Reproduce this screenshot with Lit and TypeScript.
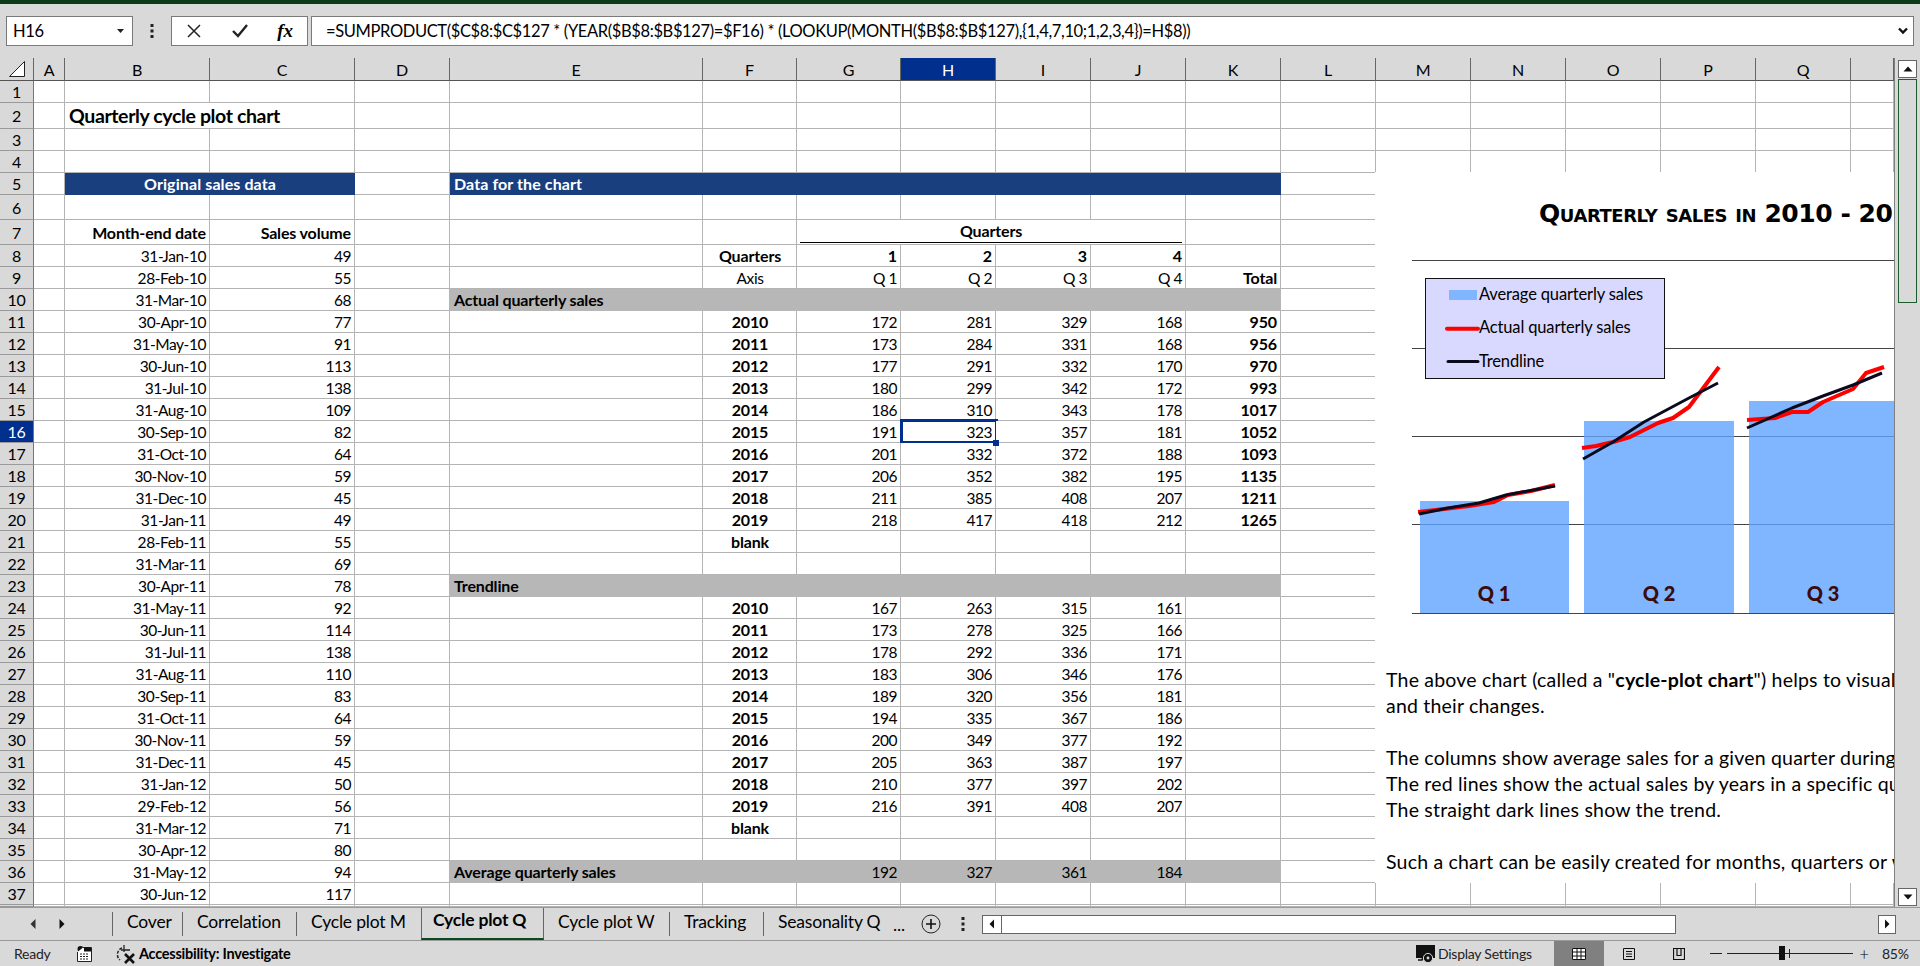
import { LitElement, html, css, svg, nothing } from "lit";
import { customElement } from "lit/decorators.js";

const COLS = ["A", "B", "C", "D", "E", "F", "G", "H", "I", "J", "K", "L", "M", "N", "O", "P", "Q", ""];

type Cell = { t?: unknown; c?: string; span?: number };

const DATES = "31-Jan-10 28-Feb-10 31-Mar-10 30-Apr-10 31-May-10 30-Jun-10 31-Jul-10 31-Aug-10 30-Sep-10 31-Oct-10 30-Nov-10 31-Dec-10 31-Jan-11 28-Feb-11 31-Mar-11 30-Apr-11 31-May-11 30-Jun-11 31-Jul-11 31-Aug-11 30-Sep-11 31-Oct-11 30-Nov-11 31-Dec-11 31-Jan-12 29-Feb-12 31-Mar-12 30-Apr-12 31-May-12 30-Jun-12".split(" ");
const VOLUMES = [49, 55, 68, 77, 91, 113, 138, 109, 82, 64, 59, 45, 49, 55, 69, 78, 92, 114, 138, 110, 83, 64, 59, 45, 50, 56, 71, 80, 94, 117];

const ACTUAL = [
  [2010, 172, 281, 329, 168, 950],
  [2011, 173, 284, 331, 168, 956],
  [2012, 177, 291, 332, 170, 970],
  [2013, 180, 299, 342, 172, 993],
  [2014, 186, 310, 343, 178, 1017],
  [2015, 191, 323, 357, 181, 1052],
  [2016, 201, 332, 372, 188, 1093],
  [2017, 206, 352, 382, 195, 1135],
  [2018, 211, 385, 408, 207, 1211],
  [2019, 218, 417, 418, 212, 1265],
];
const TREND = [
  [2010, 167, 263, 315, 161],
  [2011, 173, 278, 325, 166],
  [2012, 178, 292, 336, 171],
  [2013, 183, 306, 346, 176],
  [2014, 189, 320, 356, 181],
  [2015, 194, 335, 367, 186],
  [2016, 200, 349, 377, 192],
  [2017, 205, 363, 387, 197],
  [2018, 210, 377, 397, 202],
  [2019, 216, 391, 408, 207],
];

function buildCells() {
  const cells: Record<string, Cell> = {
    B2: { t: "Quarterly cycle plot chart", c: "title", span: 2 },
    B5: { t: "Original sales data", c: "head mid", span: 2 },
    E5: { t: "Data for the chart", c: "head", span: 7 },
    B7: { t: "Month-end date", c: "b r" },
    C7: { t: "Sales volume", c: "b r" },
    G7: { t: html`<span class="under">Quarters</span>`, c: "b mid group", span: 4 },
    F8: { t: "Quarters", c: "b mid" },
    F9: { t: "Axis", c: "mid" },
    K9: { t: "Total", c: "b r" },
    E10: { t: "Actual quarterly sales", c: "band b", span: 7 },
    F21: { t: "blank", c: "b mid" },
    E23: { t: "Trendline", c: "band b", span: 7 },
    F34: { t: "blank", c: "b mid" },
  };
  DATES.forEach((d, i) => {
    cells[`B${i + 8}`] = { t: d, c: "r" };
    cells[`C${i + 8}`] = { t: VOLUMES[i], c: "r" };
  });
  ["G", "H", "I", "J"].forEach((col, i) => {
    cells[`${col}8`] = { t: i + 1, c: "b r" };
    cells[`${col}9`] = { t: `Q ${i + 1}`, c: "r" };
  });
  ACTUAL.forEach((row, i) => {
    row.forEach((v, j) => {
      const col = ["F", "G", "H", "I", "J", "K"][j];
      cells[`${col}${i + 11}`] = { t: v, c: j === 0 ? "b mid" : j === 5 ? "b r" : "r" };
    });
  });
  TREND.forEach((row, i) => {
    row.forEach((v, j) => {
      const col = ["F", "G", "H", "I", "J"][j];
      cells[`${col}${i + 24}`] = { t: v, c: j === 0 ? "b mid" : "r" };
    });
  });
  cells.H16.c = "r active";
  cells.E36 = { t: "Average quarterly sales", c: "band b" };
  cells.F36 = { c: "band" };
  [192, 327, 361, 184].forEach((v, i) => {
    cells[`${["G", "H", "I", "J"][i]}36`] = { t: v, c: "band r" };
  });
  cells.K36 = { c: "band" };
  return cells;
}

const CELLS = buildCells();
const TABS = ["Cover", "Correlation", "Cycle plot M", "Cycle plot Q", "Cycle plot W", "Tracking", "Seasonality Q"];

@customElement("quarter-chart")
class QuarterChart extends LitElement {
  static styles = css`
    :host {
      display: block;
      position: absolute;
      left: 1375px;
      top: 114px;
      width: 519px;
      height: 711px;
      background: #fff;
      overflow: hidden;
      font-family: Lato, sans-serif;
      letter-spacing: 0;
    }
    svg {
      display: block;
    }
    .heading {
      font-family: "DejaVu Sans", sans-serif;
      font-weight: 700;
      font-size: 25px;
      font-variant: small-caps;
      letter-spacing: -0.45px;
      fill: #000;
    }
    .legend-text {
      font-size: 16.5px;
      letter-spacing: -0.15px;
      fill: #000;
    }
    .axis-label {
      font-size: 20px;
      font-weight: 900;
      fill: #3c0a0a;
      text-anchor: middle;
    }
    .notes {
      margin-top: 35px;
      padding-left: 11px;
      font-size: 19.5px;
      letter-spacing: 0.2px;
      line-height: 26px;
      white-space: nowrap;
      color: #000;
    }
    .notes p {
      margin: 0 0 26px;
    }
  `;

  render() {
    return html`
      <svg width="519" height="460" viewBox="0 0 519 460">
        <text class="heading" x="164" y="50">Quarterly sales in 2010 - 2019</text>
        ${[88, 176, 264, 352, 441].map((y) => svg`<line x1="37" x2="519" y1=${y + 0.5} y2=${y + 0.5} stroke="#444" />`)}
        ${[[45, 329, 149], [209, 249, 150], [374, 229, 145]].map(
          ([x, y, w]) => svg`<rect x=${x} y=${y} width=${w} height=${441 - y} fill="#60a4ff" fill-opacity="0.8" />`
        )}
        <text class="axis-label" x="119" y="429">Q 1</text>
        <text class="axis-label" x="284" y="429">Q 2</text>
        <text class="axis-label" x="448" y="429">Q 3</text>
        <g fill="none" stroke="#ff0000" stroke-width="4" stroke-linejoin="round">
          <polyline points="43,340 69,337 94,334 119,330 133,323 156,319 180,313" />
          <polyline points="207,276 221,274 238,270 255,265 283,251 298,246 314,235 329,215 344,195" />
          <polyline points="372,248 400,246 417,240 433,240 448,230 478,217 491,201 509,195" />
        </g>
        <g fill="none" stroke="#0a0a1e" stroke-width="3" stroke-linejoin="round">
          <polyline points="44,342 73,336 104,331 131,323 180,314" />
          <polyline points="208,287 238,270 269,250 314,226 343,211" />
          <polyline points="372,256 417,236 448,224 478,213 507,201" />
        </g>
        <rect x="50.5" y="106.5" width="239" height="100" fill="#d9d9ff" stroke="#111" />
        <rect x="74" y="118" width="28" height="10" fill="#80b6ff" />
        <line x1="72" x2="103" y1="156.7" y2="156.7" stroke="#ff0000" stroke-width="4" stroke-linecap="round" />
        <line x1="73" x2="103" y1="189.5" y2="189.5" stroke="#0a0a1e" stroke-width="3" stroke-linecap="round" />
        <text class="legend-text" x="104" y="128">Average quarterly sales</text>
        <text class="legend-text" x="104" y="161">Actual quarterly sales</text>
        <text class="legend-text" x="104" y="195">Trendline</text>
      </svg>
      <div class="notes">
        <p>The above chart (called a "<b>cycle-plot chart</b>") helps to visualize seasonal patterns<br />and their changes.</p>
        <p>The columns show average sales for a given quarter during the years.<br />The red lines show the actual sales by years in a specific quarter.<br />The straight dark lines show the trend.</p>
        <p>Such a chart can be easily created for months, quarters or weeks.</p>
      </div>
    `;
  }
}

@customElement("app-root")
export class AppRoot extends LitElement {
  static styles = css`
    :host {
      display: flex;
      flex-direction: column;
      width: 1920px;
      height: 966px;
      overflow: hidden;
      background: #d9d9d9;
      font-family: Lato, sans-serif;
      color: #000;
    }
    .top-strip {
      height: 4px;
      background: #0a3a18;
      flex: none;
    }
    /* formula bar */
    .formula-row {
      display: flex;
      align-items: stretch;
      flex: none;
      height: 30px;
      margin: 12px 6px 12px 6px;
    }
    .name-box,
    .fx-box,
    .formula {
      background: #fff;
      border: 1px solid #7a7a7a;
      box-sizing: border-box;
      display: flex;
      align-items: center;
    }
    .name-box {
      width: 127px;
      padding: 0 6px;
      justify-content: space-between;
      font-size: 16.5px;
      letter-spacing: -0.3px;
    }
    .dots {
      width: 38px;
      display: flex;
      align-items: center;
      justify-content: center;
    }
    .fx-box {
      width: 137px;
      justify-content: space-between;
      padding: 0 14px 0 14px;
    }
    .fx {
      font-family: "Liberation Serif", serif;
      font-style: italic;
      font-weight: 700;
      font-size: 19px;
    }
    .formula {
      flex: 1;
      margin-left: 3px;
      padding: 0 4px 0 14px;
      justify-content: space-between;
      font-size: 16.5px;
      letter-spacing: -0.37px;
      white-space: nowrap;
    }
    /* sheet */
    .sheet-row {
      display: flex;
      flex: none;
      height: 849px;
    }
    .sheet {
      position: relative;
      width: 1895px;
      border-right: 1px solid #808080;
      box-sizing: border-box;
      overflow: hidden;
      display: grid;
      grid-template-columns: 34px 31px 145px 145px 95px 253px 94px 104px 95px 95px 95px 95px 95px 95px 95px 95px 95px 95px 43px;
      grid-template-rows: 23px 22px 26px 22px 22px 22px 25px 25px repeat(30, 22px) 2px;
      font-size: 15.5px;
      letter-spacing: -0.45px;
    }
    .corner,
    .col,
    .row {
      background: #d9d9d9;
      display: flex;
      align-items: center;
      justify-content: center;
      box-sizing: border-box;
      font-size: 16px;
      letter-spacing: -0.2px;
    }
    .corner {
      border-right: 1px solid #666;
      border-bottom: 1px solid #555;
    }
    .col {
      border-right: 1px solid #666;
      border-bottom: 1px solid #555;
    }
    .col:last-of-type {
      border-right: none;
    }
    .row {
      border-right: 1px solid #777;
      border-bottom: 1px solid #9a9a9a;
    }
    .sel {
      background: #002f8e;
      color: #fff;
    }
    .cell {
      box-sizing: border-box;
      background: #fff;
      border-right: 1px solid #b4b4b4;
      border-bottom: 1px solid #b4b4b4;
      padding: 0 3px 0 4px;
      display: flex;
      align-items: center;
      white-space: nowrap;
      min-width: 0;
      position: relative;
    }
    .r {
      justify-content: flex-end;
    }
    .mid {
      justify-content: center;
    }
    .b {
      font-size: 16px;
      letter-spacing: -0.15px;
      font-weight: 700;
    }
    .title {
      font-size: 19.5px;
      letter-spacing: -0.37px;
      font-weight: 700;
    }
    .head {
      background: #1a3f7f;
      border-color: #1a3f7f;
      color: #fff;
      font-size: 16px;
      letter-spacing: 0.1px;
      font-weight: 700;
    }
    .band {
      background: #b7b7b7;
      border-color: #b7b7b7;
    }
    .group {
      align-items: stretch;
      padding: 0 3px 1px 3px;
    }
    .under {
      flex: 1;
      text-align: center;
      line-height: 22px;
      border-bottom: 1px solid #000;
    }
    .active::after {
      content: "";
      position: absolute;
      left: -1px;
      top: -2px;
      right: -3px;
      bottom: -2px;
      border: 3px solid #002f8e;
    }
    .active::before {
      content: "";
      position: absolute;
      right: -4px;
      bottom: -4px;
      width: 6px;
      height: 6px;
      background: #002f8e;
      z-index: 1;
    }
    /* scrollbars */
    .vscroll {
      flex: 1;
      display: flex;
      flex-direction: column;
      align-items: center;
      padding: 2px 0 1px;
      box-sizing: border-box;
    }
    .arrow-btn {
      width: 19px;
      height: 18px;
      background: #fff;
      border: 1px solid #666;
      box-sizing: border-box;
      display: flex;
      align-items: center;
      justify-content: center;
      flex: none;
    }
    .thumb {
      width: 19px;
      height: 224px;
      margin-top: 1px;
      border: 1px solid #1e5c2e;
      box-sizing: border-box;
      background: #d9d9d9;
      flex: none;
    }
    .spacer {
      flex: 1;
    }
    /* tabs */
    .tabbar {
      flex: none;
      height: 32px;
      display: flex;
      align-items: center;
      border-top: 1px solid #999;
      border-bottom: 1px solid #999;
      box-sizing: content-box;
      font-size: 17.5px;
      letter-spacing: -0.2px;
    }
    .nav {
      width: 112px;
      flex: none;
      display: flex;
      gap: 23px;
      padding-left: 30px;
      box-sizing: border-box;
    }
    .tab {
      height: 24px;
      display: flex;
      align-items: center;
      flex: none;
      border-left: 1px solid #666;
      box-sizing: border-box;
      white-space: nowrap;
      padding: 0 0 5px 14px;
    }
    .tab.on {
      height: 100%;
      align-self: stretch;
      border-left: 1px solid #666;
      border-right: 1px solid #666;
      border-bottom: 2px solid #0a4a20;
      font-weight: 700;
      margin-bottom: -1px;
      padding-left: 11px;
      padding-bottom: 7px;
    }
    .tab.on + .tab {
      border-left: none;
    }
    .more {
      width: 28px;
      flex: none;
      text-align: center;
    }
    .add {
      width: 20px;
      height: 20px;
      flex: none;
      margin-left: 8px;
    }
    .tab-dots {
      width: 22px;
      margin-left: 11px;
      display: flex;
      justify-content: center;
      flex: none;
    }
    .hscroll {
      width: 694px;
      height: 19px;
      flex: none;
      margin-left: 8px;
      background: #fff;
      border: 1px solid #666;
      box-sizing: border-box;
      display: flex;
    }
    .hleft {
      width: 18px;
      border-right: 1px solid #666;
      display: flex;
      align-items: center;
      justify-content: center;
    }
    .hright {
      width: 18px;
      height: 19px;
      flex: none;
      margin-left: 202px;
      background: #fff;
      border: 1px solid #666;
      box-sizing: border-box;
      display: flex;
      align-items: center;
      justify-content: center;
    }
    /* status */
    .status {
      flex: 1;
      display: flex;
      align-items: center;
      font-size: 14px;
      letter-spacing: -0.25px;
      white-space: nowrap;
    }
    .ready {
      margin-left: 14px;
      width: 63px;
      color: #222;
    }
    .acc {
      margin-left: 24px;
      display: flex;
      align-items: center;
      gap: 3px;
      font-size: 14.5px;
      font-weight: 700;
      width: 1300px;
    }
    .display {
      display: flex;
      align-items: center;
      gap: 2px;
      width: 138px;
      color: #222;
    }
    .view {
      width: 50px;
      height: 100%;
      display: flex;
      align-items: center;
      justify-content: center;
      flex: none;
    }
    .view.on {
      background: #808080;
    }
    .zoom-minus {
      margin-left: 6px;
      width: 12px;
      height: 1px;
      background: #222;
      flex: none;
    }
    .slider {
      margin-left: 5px;
      width: 126px;
      height: 1px;
      background: #222;
      position: relative;
      flex: none;
    }
    .knob {
      position: absolute;
      left: 52px;
      top: -7px;
      width: 6px;
      height: 14px;
      background: #111;
    }
    .tick {
      position: absolute;
      left: 62px;
      top: -4px;
      width: 1px;
      height: 9px;
      background: #222;
    }
    .zoom-plus {
      margin-left: 4px;
      font-size: 17px;
      width: 14px;
      text-align: center;
      font-weight: 300;
    }
    .pct {
      margin-left: 11px;
      color: #222;
    }
  `;

  renderSheet() {
    const out: unknown[] = [];
    out.push(html`<div class="corner">
      <svg width="18" height="18" viewBox="0 0 18 18"><path d="M1.5 16.5 L16.5 1.5 V16.5 Z" fill="#fff" stroke="#222" /></svg>
    </div>`);
    COLS.forEach((c) => out.push(html`<div class="col ${c === "H" ? "sel" : ""}">${c}</div>`));
    for (let r = 1; r <= 38; r++) {
      out.push(html`<div class="row ${r === 16 ? "sel" : ""}">${r < 38 ? r : nothing}</div>`);
      for (let i = 0; i < COLS.length; ) {
        const d = CELLS[`${COLS[i]}${r}`];
        const span = d?.span ?? 1;
        out.push(html`<div class="cell ${d?.c ?? ""}" style=${span > 1 ? `grid-column: span ${span}` : ""}>${d?.t ?? nothing}</div>`);
        i += span;
      }
    }
    return out;
  }

  render() {
    return html`
      <div class="top-strip"></div>
      <div class="formula-row">
        <div class="name-box">
          <span>H16</span>
          <svg width="10" height="6" viewBox="0 0 10 6"><path d="M1 1 H8 L4.5 5 Z" fill="#222" /></svg>
        </div>
        <div class="dots">
          <svg width="4" height="16" viewBox="0 0 4 16"><g fill="#222"><rect x="0.5" y="1" width="3" height="3" /><rect x="0.5" y="6.5" width="3" height="3" /><rect x="0.5" y="12" width="3" height="3" /></g></svg>
        </div>
        <div class="fx-box">
          <svg width="16" height="16" viewBox="0 0 16 16"><path d="M2 2 L14 14 M14 2 L2 14" stroke="#222" stroke-width="1.5" fill="none" /></svg>
          <svg width="18" height="16" viewBox="0 0 18 16"><path d="M2 8 L7 13 L16 2" stroke="#222" stroke-width="2.4" fill="none" /></svg>
          <span class="fx">fx</span>
        </div>
        <div class="formula">
          <span>=SUMPRODUCT($C$8:$C$127 * (YEAR($B$8:$B$127)=$F16) * (LOOKUP(MONTH($B$8:$B$127),{1,4,7,10;1,2,3,4})=H$8))</span>
          <svg width="12" height="8" viewBox="0 0 12 8"><path d="M2 1.5 L6 5.5 L10 1.5" stroke="#111" stroke-width="2.4" fill="none" /></svg>
        </div>
      </div>
      <div class="sheet-row">
        <div class="sheet">
          ${this.renderSheet()}
          <quarter-chart></quarter-chart>
        </div>
        <div class="vscroll">
          <div class="arrow-btn"><svg width="10" height="6" viewBox="0 0 10 6"><path d="M0.5 5.5 H9.5 L5 0.5 Z" fill="#111" /></svg></div>
          <div class="thumb"></div>
          <div class="spacer"></div>
          <div class="arrow-btn"><svg width="10" height="6" viewBox="0 0 10 6"><path d="M0.5 0.5 H9.5 L5 5.5 Z" fill="#111" /></svg></div>
        </div>
      </div>
      <div class="tabbar">
        <div class="nav">
          <svg width="6" height="10" viewBox="0 0 6 10"><path d="M5.5 0 V10 L0.5 5 Z" fill="#333" /></svg>
          <svg width="6" height="10" viewBox="0 0 6 10"><path d="M0.5 0 V10 L5.5 5 Z" fill="#111" /></svg>
        </div>
        ${TABS.map((t, i) => {
          const w = [70, 114, 125, 123, 125, 94, 122][i];
          return html`<div class="tab ${i === 3 ? "on" : ""}" style="width:${w}px">${t}</div>`;
        })}
        <div class="more">...</div>
        <svg class="add" viewBox="0 0 20 20"><circle cx="10" cy="10" r="9" fill="none" stroke="#222" /><path d="M10 5 V15 M5 10 H15" stroke="#111" stroke-width="1.6" /></svg>
        <div class="tab-dots">
          <svg width="4" height="16" viewBox="0 0 4 16"><g fill="#222"><rect x="0.5" y="1" width="3" height="3" /><rect x="0.5" y="6.5" width="3" height="3" /><rect x="0.5" y="12" width="3" height="3" /></g></svg>
        </div>
        <div class="hscroll">
          <div class="hleft"><svg width="6" height="10" viewBox="0 0 6 10"><path d="M5 0.5 V9.5 L0.5 5 Z" fill="#111" /></svg></div>
        </div>
        <div class="hright"><svg width="6" height="10" viewBox="0 0 6 10"><path d="M1 0.5 V9.5 L5.5 5 Z" fill="#111" /></svg></div>
      </div>
      <div class="status">
        <span class="ready">Ready</span>
        <svg width="15" height="16" viewBox="0 0 15 16">
          <circle cx="3.5" cy="3" r="3" fill="#111" />
          <path d="M6 1.5 H14.5 V15.5 H0.5 V6" fill="#fff" stroke="#222" />
          <rect x="7" y="1.5" width="7" height="4" fill="#111" />
          <path d="M3 8 H12 M3 10.5 H12 M3 13 H12" stroke="#222" stroke-dasharray="2 1" />
        </svg>
        <div class="acc">
          <svg width="20" height="20" viewBox="0 0 20 20">
            <path d="M6 4 A7 7 0 0 0 4 16" fill="none" stroke="#222" stroke-width="1.5" stroke-dasharray="3 1.5" />
            <path d="M8 1 V8 M5 6 H14" fill="none" stroke="#222" stroke-width="1.3" />
            <path d="M9 10 L18 19 M18 10 L9 19" stroke="#111" stroke-width="2.6" />
          </svg>
          <span>Accessibility: Investigate</span>
        </div>
        <div class="display">
          <svg width="20" height="20" viewBox="0 0 20 20">
            <rect x="0" y="1" width="19" height="13" fill="#111" />
            <path d="M2 16 H6 L7 13 H8" fill="none" stroke="#111" stroke-width="1.6" />
            <circle cx="12" cy="14" r="4.6" fill="#111" stroke="#d9d9d9" />
            <circle cx="12" cy="14" r="1.4" fill="#d9d9d9" />
          </svg>
          <span>Display Settings</span>
        </div>
        <div class="view on">
          <svg width="14" height="12" viewBox="0 0 14 12"><rect width="14" height="12" fill="#fff" /><path d="M0.5 0.5 H13.5 V11.5 H0.5 Z M0.5 4 H13.5 M0.5 8 H13.5 M5 0.5 V11.5 M9 0.5 V11.5" fill="none" stroke="#111" /></svg>
        </div>
        <div class="view">
          <svg width="12" height="12" viewBox="0 0 12 12"><path d="M0.5 0.5 H11.5 V11.5 H0.5 Z M3 3.5 H9 M3 6 H9 M3 8.5 H9" fill="none" stroke="#111" /></svg>
        </div>
        <div class="view">
          <svg width="12" height="12" viewBox="0 0 12 12"><path d="M0.5 0.5 H11.5 V11.5 H0.5 Z M4 0.5 V7.5 H8 V0.5" fill="none" stroke="#111" stroke-width="1.2" /></svg>
        </div>
        <span class="zoom-minus"></span>
        <div class="slider"><span class="knob"></span><span class="tick"></span></div>
        <span class="zoom-plus">+</span>
        <span class="pct">85%</span>
      </div>
    `;
  }
}
